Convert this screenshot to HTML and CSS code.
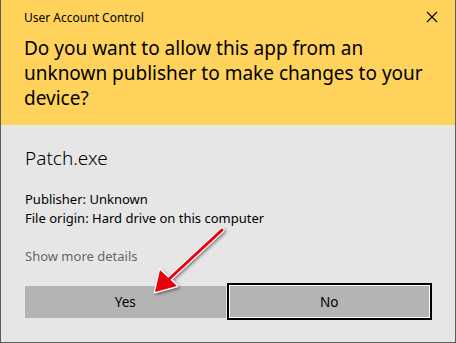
FILE: index.html
```html
<!DOCTYPE html>
<html lang="en">
<head>
    <meta charset="UTF-8">
    <title>User Account Control</title>
    <link rel="stylesheet" href="styles.css">
</head>
<body>
    <div class="dialog">
        <div class="header">
            <div class="title-bar">
                <span class="title">User Account Control</span>
                <svg class="close" width="12" height="12" viewBox="0 0 12 12">
                    <path d="M1 1 L11 11 M11 1 L1 11" stroke="#000" stroke-width="1.1" fill="none"/>
                </svg>
            </div>
            <h1 class="question">Do you want to allow this app from an unknown publisher to make changes to your device?</h1>
        </div>
        <div class="content">
            <div class="app-name">Patch.exe</div>
            <div class="info">
                <p>Publisher: Unknown</p>
                <p>File origin: Hard drive on this computer</p>
            </div>
            <a class="details" href="#">Show more details</a>
            <div class="buttons">
                <button class="btn btn-yes">Yes</button>
                <button class="btn btn-no">No</button>
            </div>
        </div>

        <!-- red annotation arrow pointing at Yes -->
        <svg class="arrow" width="456" height="343" viewBox="0 0 456 343">
            <defs>
                <filter id="shadow" x="-20%" y="-20%" width="140%" height="140%">
                    <feDropShadow dx="1.5" dy="1.5" stdDeviation="1.5" flood-color="#000" flood-opacity="0.45"/>
                </filter>
            </defs>
            <g filter="url(#shadow)">
                <path d="M222 230 L168 280" stroke="#fff" stroke-width="5" stroke-linecap="round"/>
                <path d="M155 292 L160 270 L177 286 Z" fill="#fff" stroke="#fff" stroke-width="2.5" stroke-linejoin="round"/>
                <path d="M222 230 L168 280" stroke="#e8000b" stroke-width="3" stroke-linecap="round"/>
                <path d="M155 292 L160 270 L177 286 Z" fill="#e8000b"/>
            </g>
        </svg>
    </div>
</body>
</html>
```

FILE: styles.css
```css
body {
    margin: 0;
    font-family: "Noto Sans", Arial, sans-serif;
    color: #000;
}
.dialog {
    position: relative;
    width: 456px;
    height: 343px;
    box-sizing: border-box;
    border: 1px solid #5c5c5c;
    border-top: none;
    background-color: #e6e6e6;
}
.header {
    background-color: #ffd35b;
    height: 125px;
    padding: 0 23px;
}
.title-bar {
    display: flex;
    justify-content: space-between;
    align-items: center;
    height: 34px;
}
.title {
    font-size: 12px;
}
.close {
    margin-right: -6px;
}
.question {
    margin: 2px 0 0;
    font-size: 19px;
    font-weight: normal;
    line-height: 25px;
}
.content {
    padding: 20px 23px 0 24px;
}
.app-name {
    font-size: 19px;
    line-height: 26px;
    font-weight: 300;
}
.info {
    margin-top: 19px;
    font-size: 13px;
    line-height: 19px;
}
.info p {
    margin: 0;
}
.details {
    display: block;
    margin-top: 19px;
    font-size: 13px;
    line-height: 19px;
    color: #666;
    text-decoration: none;
}
.buttons {
    display: flex;
    align-items: center;
    gap: 1px;
    margin-top: 17px;
    height: 37px;
}
.btn {
    font-family: inherit;
    font-size: 13.5px;
    color: #000;
    background-color: #b4b4b4;
    border: none;
    padding: 0;
}
.btn-yes {
    width: 202px;
    height: 32px;
}
.btn-no {
    width: 207px;
    height: 37px;
    border: 2px solid #000;
    box-shadow: inset 0 0 0 1px #fff;
}
.arrow {
    position: absolute;
    top: 0;
    left: -1px;
    pointer-events: none;
}
```
